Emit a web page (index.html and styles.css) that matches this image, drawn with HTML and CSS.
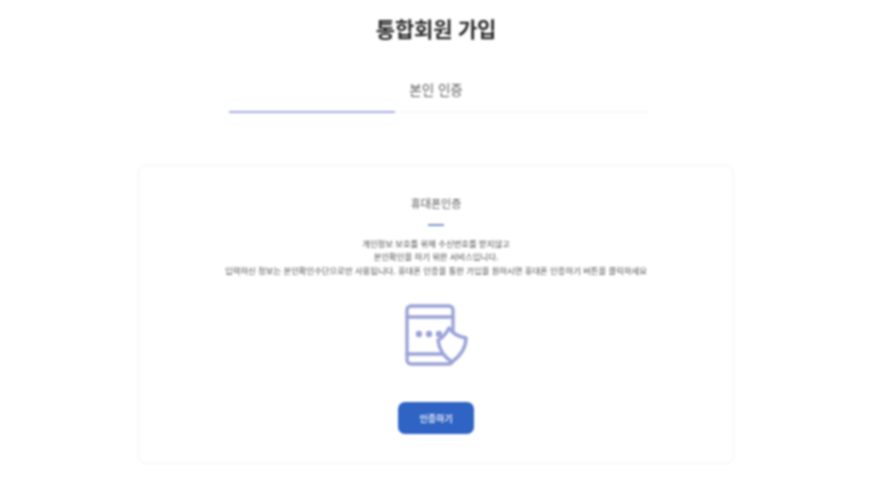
FILE: index.html
```html
<!DOCTYPE html>
<html lang="ko">
<head>
<meta charset="utf-8">
<title>통합회원 가입</title>
<link rel="stylesheet" href="styles.css">
</head>
<body>
<main class="page">
  <h1 class="title">통합회원 가입</h1>
  <section class="steps">
    <div class="step-label">본인 인증</div>
    <div class="track"><div class="fill"></div></div>
  </section>
  <section class="card">
    <h2 class="card-title">휴대폰인증</h2>
    <div class="dash"></div>
    <p class="desc">개인정보 보호를 위해 수신번호를 받지않고<br>본인확인을 하기 위한 서비스입니다.<br>입력하신 정보는 본인확인수단으로만 사용됩니다. 휴대폰 인증을 통한 가입을 원하시면 휴대폰 인증하기 버튼을 클릭하세요</p>
    <svg class="icon" viewBox="0 0 64 62" width="64" height="62" fill="none" stroke="#9aa3d8" stroke-width="3.400" stroke-linejoin="round" stroke-linecap="round">
      <path d="M48 52V56a4 4 0 0 1-4 4H6a4 4 0 0 1-4-4V6a4 4 0 0 1 4-4h38a4 4 0 0 1 4 4v20"/>
      <path d="M2 13H48"/>
      <path d="M2 50H42"/>
      <path d="M44 24C48 30 54 33 61 34 61 44 55 52 47 58 39 53 34 45 33 36 38 34 41 30 44 24Z" fill="#fff"/>
      <circle cx="14" cy="30" r="3.200" fill="#9aa3d8" stroke="none"/>
      <circle cx="24" cy="30" r="3.200" fill="#9aa3d8" stroke="none"/>
      <circle cx="34" cy="30" r="3.200" fill="#9aa3d8" stroke="none"/>
    </svg>
    <button class="btn" type="button">인증하기</button>
  </section>
</main>
</body>
</html>
```
FILE: styles.css
```css
* { box-sizing: border-box; }
html, body { margin: 0; padding: 0; background: #fff; }
body { height: 480px; overflow: hidden; font-family: "Noto Sans CJK KR", "Noto Sans", sans-serif; }
.page { display: flex; flex-direction: column; align-items: center; padding: 13px 16px 0 0; filter: blur(0.8px); }
.title { margin: 0; font-size: 21px; line-height: 30px; font-weight: 700; color: #2b2b2b; letter-spacing: -0.2px; }
.steps { width: 420px; margin: 36px 0 0 6px; display: flex; flex-direction: column; align-items: center; }
.step-label { font-size: 13.500px; line-height: 20px; color: #5c5c5c; margin-right: 6px; }
.track { width: 100%; height: 2px; margin-top: 12px; background: #f9f9fb; }
.fill { width: 166px; height: 100%; background: #a3aee0; }
.card { width: 596px; height: 299px; margin-top: 52px; border: 1px solid #f2f2f4; border-radius: 8px; background: #fff; display: flex; flex-direction: column; align-items: center; padding-top: 29px; }
.card-title { margin: 0; font-size: 11px; line-height: 16px; font-weight: 400; color: #555; }
.dash { width: 16px; height: 1.500px; margin-top: 13px; background: #7f95c8; }
.desc { margin: 11px 0 0; font-size: 8.360px; line-height: 13.500px; color: #4a4a4a; text-align: center; white-space: nowrap; }
.icon { margin-top: 27px; margin-left: 1px; }
.btn { margin-top: 36px; width: 76px; height: 32px; border: 0; border-radius: 7px; background: #2f63c4; color: #fff; font-family: inherit; font-size: 9px; font-weight: 500; }
```
